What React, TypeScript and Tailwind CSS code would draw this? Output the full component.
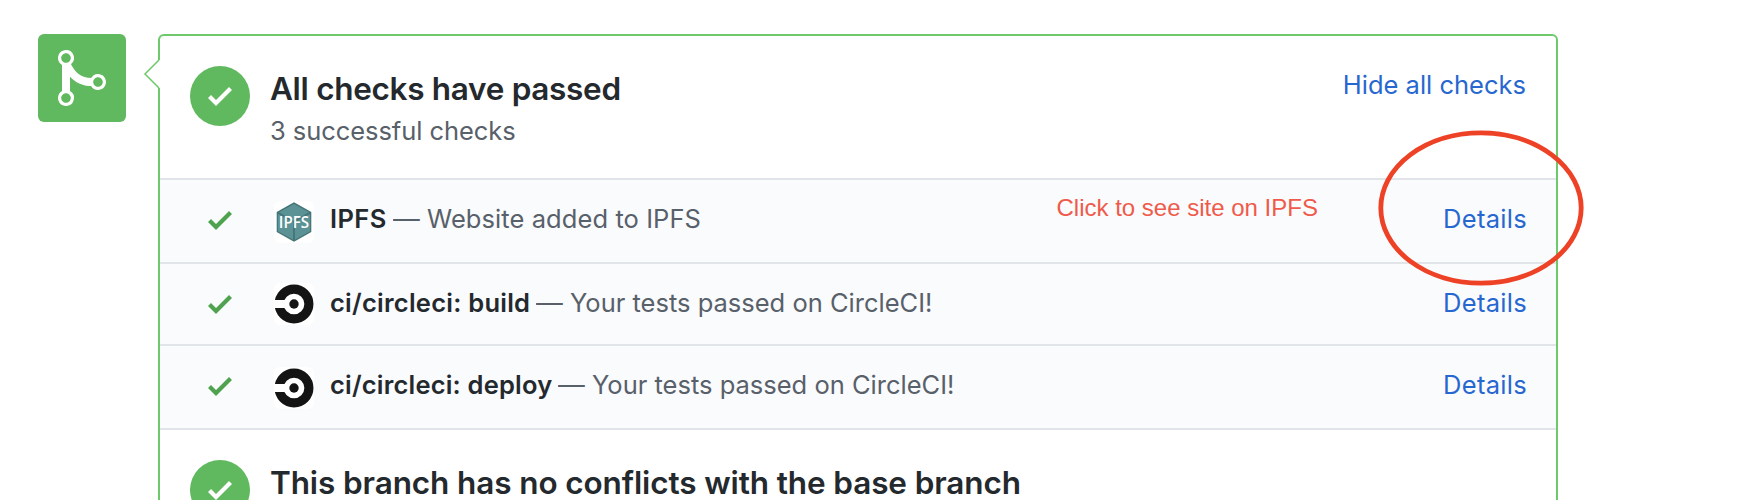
import type { ReactNode } from 'react';

const CHECK_PATH = 'M12 5l-8 8-4-4 1.5-1.5L4 10l6.5-6.5L12 5z';
const MERGE_PATH =
  'M10 7c-.73 0-1.38.41-1.73 1.02V8C7.22 7.98 6 7.64 5.14 6.98c-.75-.58-1.5-1.61-1.89-2.44A1.993 1.993 0 0 0 2 .99C.89.99 0 1.89 0 3a2 2 0 0 0 1 1.72v6.56c-.59.35-1 .99-1 1.72 0 1.11.89 2 2 2a1.993 1.993 0 0 0 1-3.72V7.67c.67.7 1.44 1.27 2.3 1.69.86.42 2.03.63 2.97.64v-.02c.36.61 1 1.02 1.73 1.02 1.11 0 2-.89 2-2 0-1.11-.89-2-2-2zm-6.8 6c0 .66-.55 1.2-1.2 1.2-.65 0-1.2-.55-1.2-1.2 0-.65.55-1.2 1.2-1.2.65 0 1.2.55 1.2 1.2zm0-10c0 .66-.55 1.2-1.2 1.2C1.34 4.2.8 3.65.8 3c0-.65.55-1.2 1.2-1.2.65 0 1.2.55 1.2 1.2zm8 6c0 .66-.55 1.2-1.2 1.2-.65 0-1.2-.55-1.2-1.2 0-.65.55-1.2 1.2-1.2.65 0 1.2.55 1.2 1.2z';

function CheckIcon({ className }: { className: string }) {
  return (
    <svg viewBox="0 0 12 16" className={`h-8 w-6 shrink-0 ${className}`} fill="currentColor">
      <path d={CHECK_PATH} />
    </svg>
  );
}

function StatusCircle() {
  return (
    <div className="mt-[30px] flex size-[60px] shrink-0 items-start justify-center rounded-full bg-[#60b95e] pt-3.5">
      <CheckIcon className="text-white" />
    </div>
  );
}

function IpfsLogo() {
  return (
    <svg viewBox="0 0 40 40" className="size-10">
      <path d="M20 0.3L37.3 10v20L20 39.7 2.7 30V10z" fill="#447476" />
      <path d="M20 1.9L35 10.3 20 18.8 5 10.3z" fill="#5b9295" />
      <path d="M3.9 11.8L19.1 20.3v17.4L3.9 29.2z" fill="#5b9295" />
      <path d="M36.1 11.8L20.9 20.3v17.4L36.1 29.2z" fill="#5b9295" />
      <text
        x="4.8"
        y="26"
        textLength="30.4"
        lengthAdjust="spacingAndGlyphs"
        fill="#fff"
        className="font-['Open_Sans',sans-serif] text-[16px] font-semibold"
      >
        IPFS
      </text>
    </svg>
  );
}

function CircleLogo() {
  return (
    <svg viewBox="0 0 40 40" className="size-10">
      <circle cx="20" cy="20" r="14.9" fill="none" stroke="#141414" strokeWidth="9.1" />
      <rect x="0" y="16" width="12" height="8" fill="#fff" />
      <circle cx="20" cy="20" r="4.7" fill="#141414" />
    </svg>
  );
}

function CheckRow(props: {
  className: string;
  avatarClass: string;
  name: ReactNode;
  text: ReactNode;
  logo: ReactNode;
}) {
  return (
    <div className={`flex items-start border-b-2 border-[#e1e4e8] bg-[#fafbfd] pr-[29px] pl-12 ${props.className}`}>
      <CheckIcon className="mt-6 text-[#50a34e]" />
      <div className={`ml-[42px] flex h-[42px] w-10 shrink-0 items-center rounded-md bg-white ${props.avatarClass}`}>
        {props.logo}
      </div>
      <div className="mt-[19px] ml-4 flex flex-1 text-[25.5px] leading-10 text-[#586069]">
        {props.name}
        <span className="inline-block w-[34px] origin-left scale-x-[1.05]">—</span>
        {props.text}
      </div>
      <a className="mt-[19px] text-[25.5px] leading-10 tracking-[0.3px] text-[#2767d0]">Details</a>
    </div>
  );
}

export default function App() {
  return (
    <div className="relative flex h-[500px] w-[1748px] items-start overflow-hidden bg-white pt-[34px] pl-[38px] font-['Inter',sans-serif] whitespace-nowrap">
      <div className="h-[88px] w-[88px] shrink-0 rounded-md bg-[#60b95e] pt-3 pl-5">
        <svg viewBox="0 0 12 16" className="h-16 w-12" fill="#fff">
          <path d={MERGE_PATH} />
        </svg>
      </div>

      <div className="relative ml-8 h-[520px] w-[1400px] shrink-0 rounded-md border-2 border-[#6dc96a]">
        <svg viewBox="0 0 18 32" className="absolute top-[22px] -left-[17px] h-8 w-[18px]">
          <path d="M15 2h2v28h-2z" fill="#fff" />
          <path d="M16 2L2 16l14 14" fill="#fff" stroke="#6dc96a" strokeWidth="1.5" />
        </svg>

        <div className="flex h-[144px] items-start border-b-2 border-[#e1e4e8] pr-[30px] pl-[30px]">
          <StatusCircle />
          <div className="mt-[29px] ml-5 flex-1">
            <h3 className="text-[31.5px] leading-[48px] font-semibold tracking-[-0.3px] text-[#24292e]">
              All checks have passed
            </h3>
            <p className="mt-[3px] text-[25.5px] leading-[30px] tracking-[-0.06px] text-[#586069]">
              3 successful checks
            </p>
          </div>
          <a className="mt-[34px] text-[25.5px] leading-[30px] text-[#2767d0]">Hide all checks</a>
        </div>

        <CheckRow
          className="h-[84px]"
          avatarClass="mt-[21px]"
          logo={<IpfsLogo />}
          name={<strong className="w-[63px] font-semibold tracking-[0.4px] text-[#24292e]">IPFS</strong>}
          text={<span className="tracking-[0.08px]">Website added to IPFS</span>}
        />
        <CheckRow
          className="h-[82px]"
          avatarClass="mt-[19px]"
          logo={<CircleLogo />}
          name={<strong className="w-[206px] font-semibold tracking-[0.25px] text-[#24292e]">ci/circleci: build</strong>}
          text={<span>Your tests passed on CircleCI!</span>}
        />
        <CheckRow
          className="h-[84px]"
          avatarClass="mt-[21px]"
          logo={<CircleLogo />}
          name={<strong className="w-[228px] font-semibold tracking-[0.2px] text-[#24292e]">ci/circleci: deploy</strong>}
          text={<span>Your tests passed on CircleCI!</span>}
        />

        <div className="flex items-start pl-[30px]">
          <StatusCircle />
          <h3 className="mt-[38px] ml-5 text-[31.5px] leading-[30px] font-semibold tracking-[-0.11px] text-[#24292e]">
            This branch has no conflicts with the base branch
          </h3>
        </div>
      </div>

      <p className="absolute top-[194px] left-[1056.5px] font-['Liberation_Sans',sans-serif] text-2xl leading-7 text-[#ef5a4b]">
        Click to see site on IPFS
      </p>
      <svg viewBox="0 0 210 160" className="absolute top-[128px] left-[1376px] h-[160px] w-[210px]">
        <ellipse cx="105" cy="80" rx="100.2" ry="75.2" fill="none" stroke="#ee4226" strokeWidth="4.8" />
      </svg>
    </div>
  );
}
